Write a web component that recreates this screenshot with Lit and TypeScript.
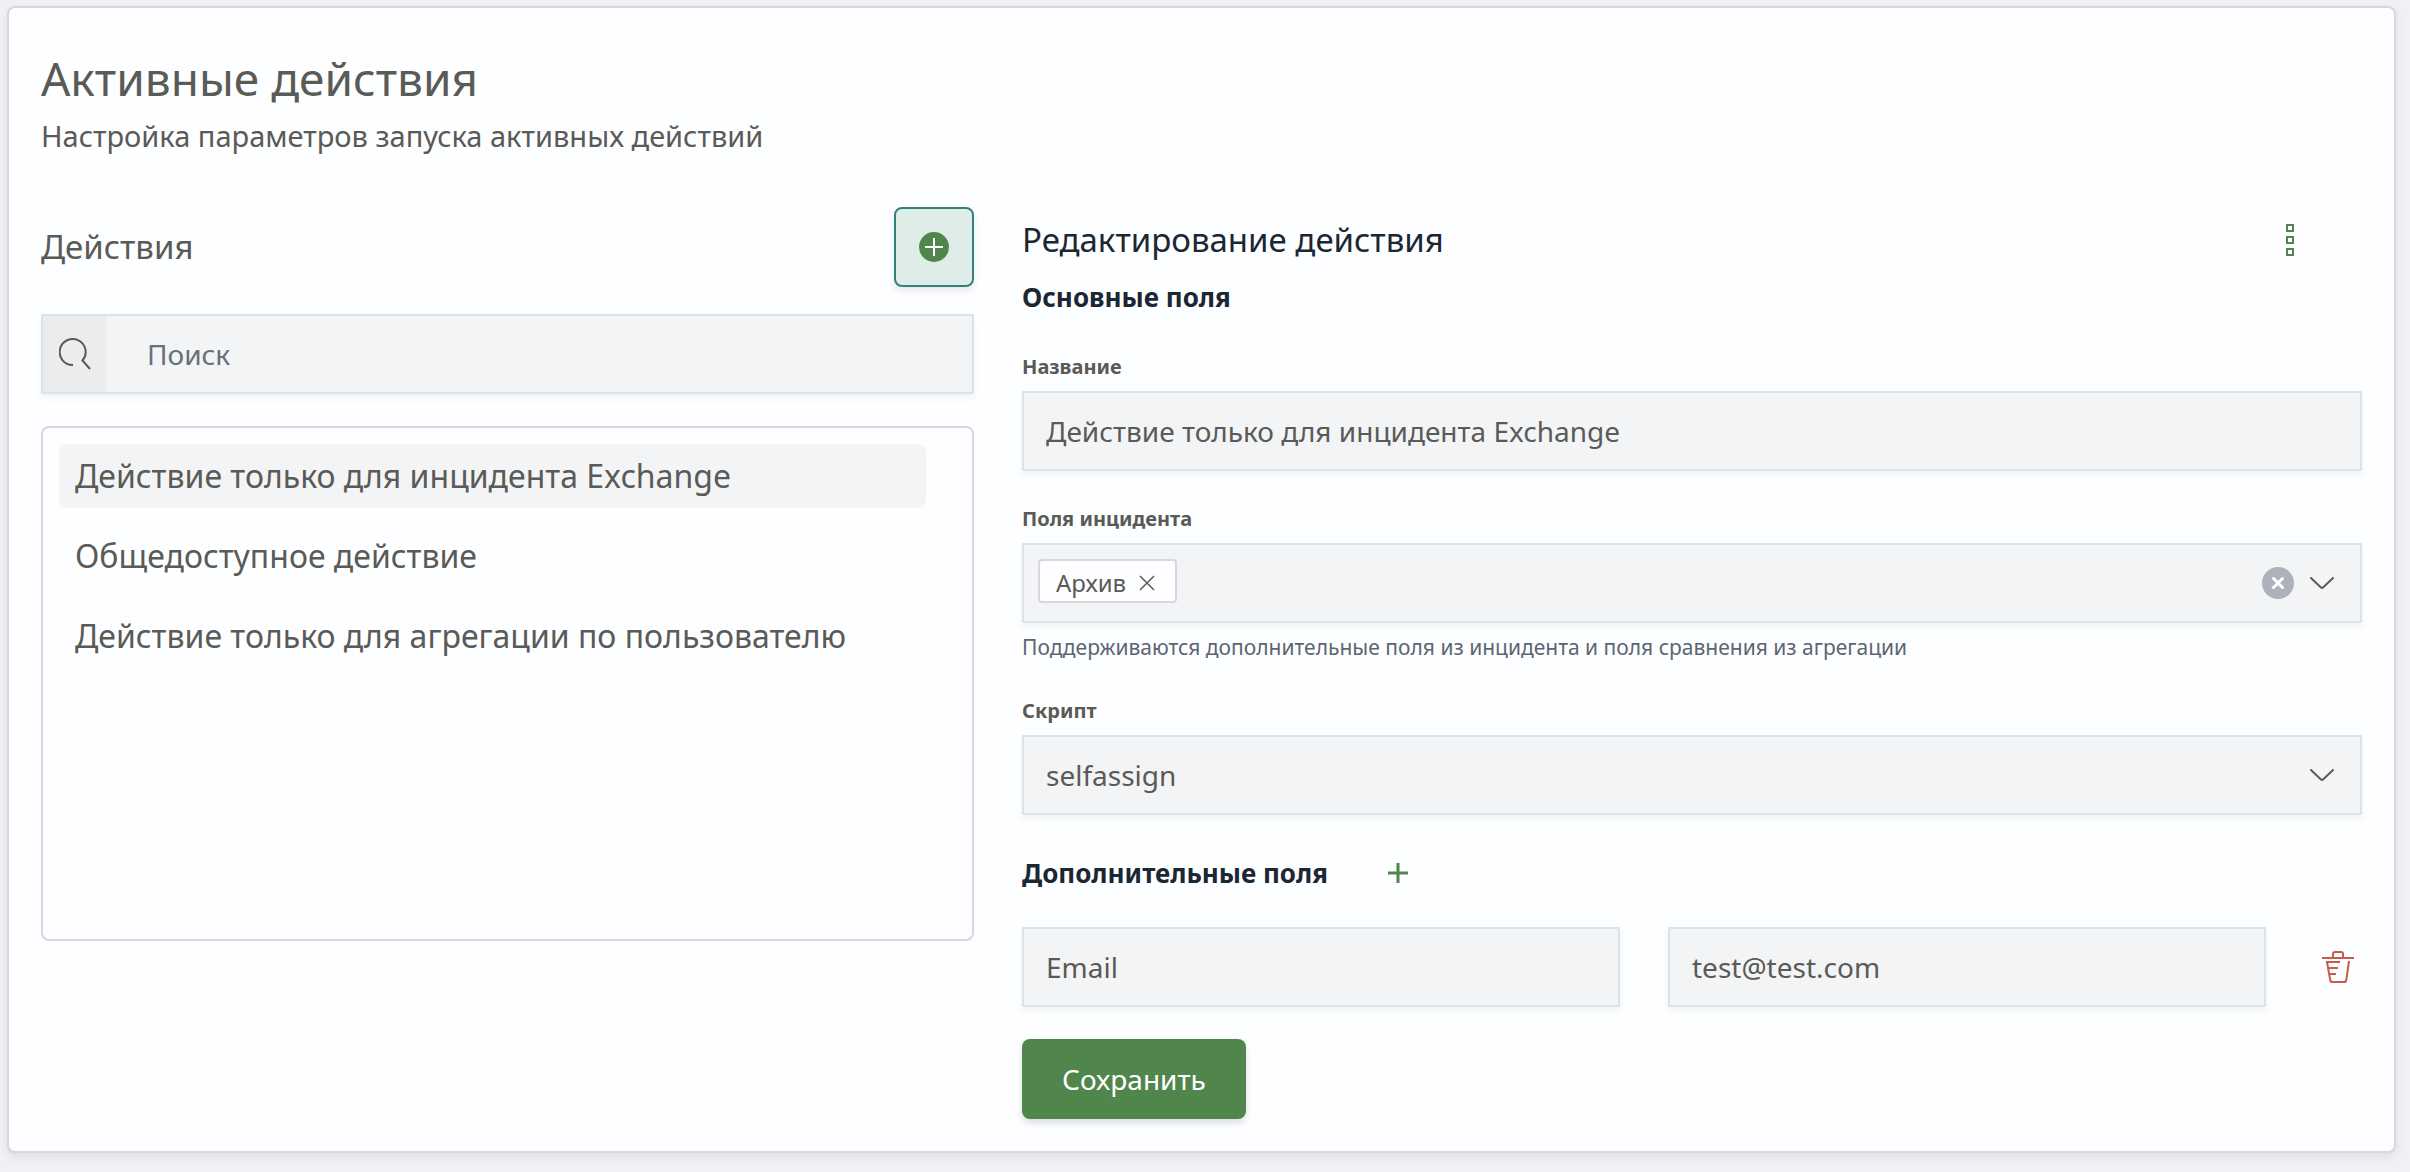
import { LitElement, html, css, svg } from "lit";
import { customElement, state } from "lit/decorators.js";
import { classMap } from "lit/directives/class-map.js";

const searchIcon = svg`<svg class="icon" width="32" height="32" viewBox="0 0 32 32" fill="none" stroke="#5a5a57" stroke-width="2" aria-hidden="true"><path d="M14 27A13 13 0 1 1 23.5 22.5L31 31"/></svg>`;
const addIcon = svg`<svg class="icon" width="30" height="30" viewBox="0 0 30 30" aria-hidden="true"><circle cx="15" cy="15" r="15" fill="#50864c"/><path d="M6 15H24M15 6V24" stroke="#fff" stroke-width="2"/></svg>`;
const moreIcon = svg`<svg class="icon" width="8" height="32" viewBox="0 0 8 32" fill="none" stroke="#50864c" stroke-width="2" aria-hidden="true"><path d="M1 1h6v6H1zM1 13h6v6H1zM1 25h6v6H1z"/></svg>`;
const removeIcon = svg`<svg class="icon" width="16" height="16" viewBox="0 0 16 16" fill="none" stroke="#5a5a57" stroke-width="1.5" aria-hidden="true"><path d="M1 1L15 15M15 1L1 15"/></svg>`;
const clearIcon = svg`<svg class="icon" width="32" height="32" viewBox="0 0 32 32" aria-hidden="true"><circle cx="16" cy="16" r="16" fill="#adb1b9"/><path d="M11.5 11.5L20.5 20.5M20.5 11.5L11.5 20.5" stroke="#fff" stroke-width="3" stroke-linecap="round"/></svg>`;
const chevronIcon = svg`<svg class="icon" width="24" height="12" viewBox="0 0 24 12" fill="none" stroke="#5a5a57" stroke-width="2" stroke-linecap="round" stroke-linejoin="round" aria-hidden="true"><path d="M1 1L11 10.4Q12 11.4 13 10.4L23 1"/></svg>`;
const plusIcon = svg`<svg class="icon" width="20" height="20" viewBox="0 0 20 20" stroke="#50864c" stroke-width="3" aria-hidden="true"><path d="M0 10H20M10 0V20"/></svg>`;
const trashIcon = svg`<svg class="icon" width="32" height="32" viewBox="0 0 32 32" fill="none" stroke="#cc5a49" stroke-width="2" aria-hidden="true"><path d="M0 7H32M11 7V3Q11 1 13 1H19Q21 1 21 3V7M27 10L24.3 29Q24 31 22 31H10.500Q8.500 31 8.200 29L5 11H18M6.500 17H16M7.500 23H14"/></svg>`;

@customElement("app-root")
export class AppRoot extends LitElement {
  @state() private selected = 0;

  private actions = [
    "Действие только для инцидента Exchange",
    "Общедоступное действие",
    "Действие только для агрегации по пользователю",
  ];

  static styles = css`
    :host {
      display: block;
      box-sizing: border-box;
      min-height: 100vh;
      padding: 6px 14px 18px 7px;
      background: #f0f1f4;
      color: #5a5a57;
      font-family: "Noto Sans", sans-serif;
      font-size: 28px;
    }
    *, *::before, *::after { box-sizing: border-box; }
    h1, h2, h3, p, ul { margin: 0; padding: 0; font-weight: 400; }
    ul { list-style: none; }
    button, input, select { margin: 0; font: inherit; color: inherit; border-radius: 0; }
    button { padding: 0; border: 0; background: none; cursor: pointer; }
    .icon { display: block; flex: none; }
    .card {
      padding: 42px 32px 32px;
      border: 2px solid #d6d8dc;
      border-radius: 8px;
      background: #fdfeff;
      box-shadow: 0 4px 8px rgba(40, 50, 80, 0.09);
    }
    .title { font-size: 46px; line-height: 56px; }
    .subtitle { margin-top: 10px; font-size: 29px; line-height: 40px; }
    .columns {
      display: grid;
      grid-template-columns: minmax(0, 933fr) minmax(0, 1340fr);
      gap: 48px;
      align-items: start;
      margin-top: 51px;
    }
    .bar { display: flex; align-items: center; justify-content: space-between; }
    .heading { font-size: 33px; line-height: 48px; }
    .dark { color: #1b2733; }
    .add {
      display: grid;
      place-items: center;
      width: 80px;
      height: 80px;
      border: 2px solid #35807b;
      border-radius: 8px;
      background: #dfede8;
      box-shadow: 0 4px 6px rgba(40, 50, 80, 0.1);
    }
    .box {
      width: 100%;
      height: 80px;
      border: 2px solid #dce2e7;
      background: #f3f4f6;
      box-shadow: 0 4px 6px rgba(40, 60, 90, 0.06);
    }
    .text { display: block; padding: 0 22px; outline: none; appearance: none; }
    .search { display: flex; margin-top: 27px; }
    .search-mark { display: grid; place-items: center; width: 64px; background: #ebeced; }
    .search-input { flex: 1; min-width: 0; padding: 0 40px; border: 0; background: none; outline: none; }
    .search-input::placeholder { color: #6a7078; opacity: 1; }
    .list {
      display: flex;
      flex-direction: column;
      gap: 16px;
      min-height: 515px;
      margin-top: 32px;
      padding: 16px 46px 16px 16px;
      border: 2px solid #d6d8dc;
      border-radius: 8px;
    }
    .item {
      width: 100%;
      min-height: 64px;
      padding: 0 16px;
      border-radius: 8px;
      font-size: 32px;
      line-height: 44px;
      text-align: left;
    }
    .item.active { background: #f3f4f6; }
    .editor { padding-top: 9px; }
    .tool { display: grid; place-items: center; width: 48px; height: 48px; }
    .editor-bar { padding-right: 48px; }
    .section { font-size: 26px; font-weight: 700; line-height: 40px; }
    .first { margin: 13px 0 34px; }
    .extra { display: flex; align-items: center; gap: 60px; height: 40px; margin: 38px 0 34px; }
    .field + .field { margin-top: 32px; }
    .label { display: block; margin-bottom: 8px; font-size: 20px; font-weight: 700; line-height: 32px; }
    .hint { margin-top: 8px; color: #5b6573; font-size: 21px; line-height: 32px; }
    .multi { display: flex; align-items: center; justify-content: space-between; padding: 0 26px 0 14px; }
    .chip {
      display: flex;
      align-items: center;
      gap: 13px;
      height: 44px;
      margin-bottom: 4px;
      padding: 4px 20px 0 16px;
      border: 2px solid #d6d8dc;
      border-radius: 4px;
      background: #fdfeff;
      font-size: 24px;
      line-height: 36px;
    }
    .controls { display: flex; align-items: center; gap: 16px; }
    .select { display: grid; align-items: center; }
    .select > * { grid-area: 1 / 1; }
    .select .icon { justify-self: end; margin-right: 28px; pointer-events: none; }
    .pair { display: grid; grid-template-columns: 1fr 1fr 48px; align-items: center; gap: 48px; }
    .save {
      height: 80px;
      margin-top: 32px;
      padding: 0 40px;
      border-radius: 8px;
      background: #50864c;
      color: #fff;
      box-shadow: 0 4px 6px rgba(40, 50, 80, 0.16);
    }
  `;

  render() {
    return html`
      <main class="card">
        <h1 class="title">Активные действия</h1>
        <p class="subtitle">Настройка параметров запуска активных действий</p>
        <div class="columns">
          <section>
            <div class="bar">
              <h2 class="heading">Действия</h2>
              <button class="add" type="button" aria-label="Добавить действие">${addIcon}</button>
            </div>
            <div class="box search">
              <label class="search-mark" for="search" aria-label="Поиск">${searchIcon}</label>
              <input class="search-input" id="search" type="text" placeholder="Поиск" />
            </div>
            <ul class="list">
              ${this.actions.map((name, i) => html`
                <li>
                  <button type="button" class=${classMap({ item: true, active: i === this.selected })}
                    @click=${() => { this.selected = i; }}>${name}</button>
                </li>`)}
            </ul>
          </section>
          <form class="editor" @submit=${(e: Event) => e.preventDefault()}>
            <div class="bar editor-bar">
              <h2 class="heading dark">Редактирование действия</h2>
              <button class="tool" type="button" aria-label="Меню">${moreIcon}</button>
            </div>
            <h3 class="section dark first">Основные поля</h3>
            <div class="field">
              <label class="label" for="name">Название</label>
              <input class="box text" id="name" type="text" .value=${this.actions[0]} />
            </div>
            <div class="field" role="group" aria-labelledby="fields-label">
              <span class="label" id="fields-label">Поля инцидента</span>
              <div class="box multi">
                <span class="chip">Архив<button type="button" aria-label="Удалить Архив">${removeIcon}</button></span>
                <span class="controls">
                  <button type="button" aria-label="Очистить">${clearIcon}</button>
                  <button type="button" aria-label="Открыть список">${chevronIcon}</button>
                </span>
              </div>
              <p class="hint">Поддерживаются дополнительные поля из инцидента и поля сравнения из агрегации</p>
            </div>
            <div class="field">
              <label class="label" for="script">Скрипт</label>
              <div class="select">
                <select class="box text" id="script"><option>selfassign</option></select>
                ${chevronIcon}
              </div>
            </div>
            <div class="extra">
              <h3 class="section dark">Дополнительные поля</h3>
              <button type="button" aria-label="Добавить поле">${plusIcon}</button>
            </div>
            <div class="pair">
              <input class="box text" type="text" aria-label="Имя поля" .value=${"Email"} />
              <input class="box text" type="text" aria-label="Значение поля" .value=${"test@test.com"} />
              <button class="tool" type="button" aria-label="Удалить поле">${trashIcon}</button>
            </div>
            <button class="save" type="submit">Сохранить</button>
          </form>
        </div>
      </main>
    `;
  }
}
